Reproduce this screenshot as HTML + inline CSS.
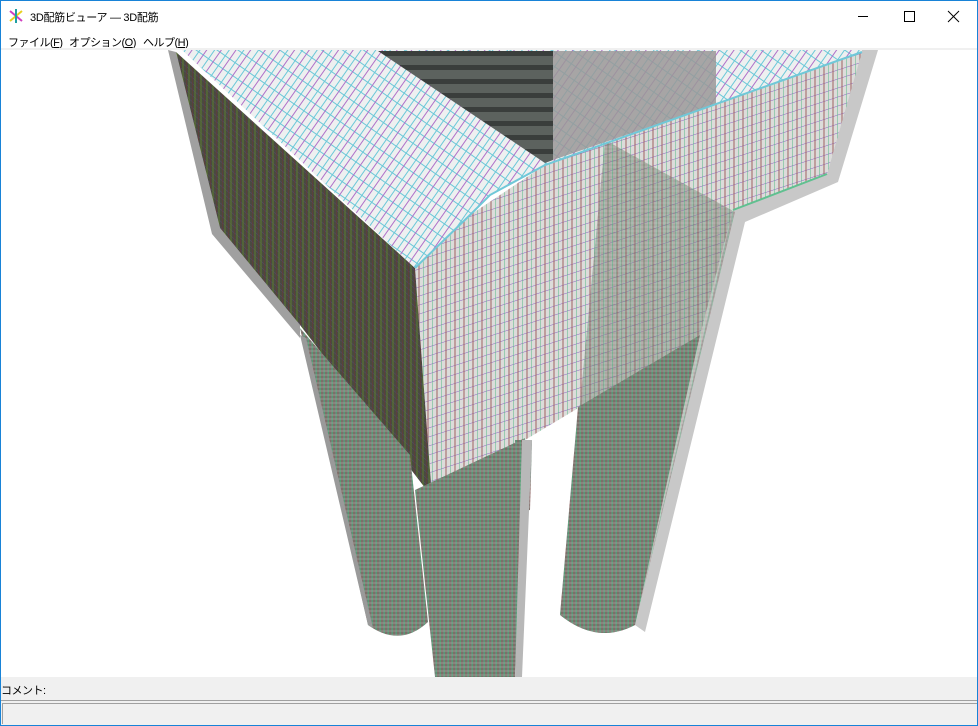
<!DOCTYPE html>
<html><head><meta charset="utf-8"><style>
html,body{margin:0;padding:0;width:978px;height:726px;overflow:hidden;background:#fff;font-family:"Liberation Sans","Noto Sans CJK JP",sans-serif;}
.win{position:absolute;left:0;top:0;width:976px;height:725px;border:1px solid #1883d7;border-top:none;background:#fff;}
.title{position:absolute;left:0;top:0;width:978px;height:31px;border-top:1px solid #1883d7;box-sizing:border-box;}
.title .t{position:absolute;left:30px;top:8px;font-size:11px;letter-spacing:-0.3px;color:#000;}
.m{position:absolute;top:34px;font-size:11px;letter-spacing:-0.5px;white-space:nowrap;}
.cbar{position:absolute;left:1px;top:677px;width:976px;height:23px;background:#f0f0f0;font-size:11px;letter-spacing:-0.5px;}
.sbar{position:absolute;left:1px;top:700px;width:976px;height:25px;background:#f0f0f0;border-top:1px solid #a0a0a0;box-sizing:border-box;}
.sbar div{position:absolute;left:1px;top:2px;right:0;bottom:1px;border-left:1px solid #a0a0a0;border-top:1px solid #a0a0a0;}
</style></head><body>
<div class="win"></div>
<div class="title">
<svg style="position:absolute;left:8px;top:7px" width="16" height="16" viewBox="0 0 16 16"><line x1="2" y1="3" x2="14" y2="13" stroke="#d040c0" stroke-width="2"/><line x1="2" y1="13" x2="14" y2="3" stroke="#e8d020" stroke-width="2"/><line x1="8" y1="1" x2="8" y2="15" stroke="#20a0a0" stroke-width="2"/></svg>
<div class="t">3D配筋ビューア ― 3D配筋</div>
<svg style="position:absolute;left:855px;top:8px" width="110" height="16"><line x1="3" y1="7.5" x2="13" y2="7.5" stroke="#000"/><rect x="49.5" y="2.5" width="10" height="10" fill="none" stroke="#000"/><line x1="93" y1="2" x2="104" y2="13" stroke="#000"/><line x1="104" y1="2" x2="93" y2="13" stroke="#000"/></svg>
</div>
<div class="m" style="left:8px">ファイル(<u>F</u>)</div>
<div class="m" style="left:69px">オプション(<u>O</u>)</div>
<div class="m" style="left:143px">ヘルプ(<u>H</u>)</div>
<div style="position:absolute;left:1px;top:48px;width:976px;height:2px;background:#f0f0f0"></div>
<svg style="position:absolute;left:0;top:50px" width="978" height="627" viewBox="0 50 978 627">
<defs>
<pattern id="gTop" width="12" height="12" patternUnits="userSpaceOnUse" patternTransform="rotate(35)"><rect width="12" height="12" fill="#eef0f0"/><path d="M0 0H12M0 0V12" stroke="#6ac8d8" stroke-width="2"/><path d="M6 0V12" stroke="#b070c8" stroke-width="1"/></pattern>
<pattern id="gFront" width="9" height="9" patternUnits="userSpaceOnUse" patternTransform="skewY(-18)"><rect width="9" height="9" fill="#dcdcda"/><path d="M0 0H9" stroke="#8a60c0" stroke-width="1"/><path d="M0 0V9" stroke="#58b888" stroke-width="1"/><path d="M5 0V9" stroke="#a06060" stroke-width="1"/></pattern>
<pattern id="gLeft" width="6" height="6" patternUnits="userSpaceOnUse" patternTransform="skewY(40)"><rect width="6" height="6" fill="#4a4a40"/><path d="M0 0H6" stroke="#5a4878"/><path d="M0 0V6" stroke="#6a3838"/><path d="M3 0V6" stroke="#5a7a30"/></pattern>
<pattern id="gPile" width="4" height="4" patternUnits="userSpaceOnUse"><rect width="4" height="4" fill="#6f8478"/><path d="M0 0V4" stroke="#3fb070" stroke-width="1"/><path d="M2 0V4" stroke="#8a5a5a" stroke-width="1"/><path d="M0 3H4" stroke="#a8b0a8" stroke-width="0.6"/></pattern>
<pattern id="gHole" width="20" height="14" patternUnits="userSpaceOnUse"><rect width="20" height="14" fill="#5c625e"/><rect y="9" width="20" height="5" fill="#3a3e3c"/></pattern>
</defs>
<polygon points="862,50 878,50 838,182 745,222 645,632 635,625 733,210 827,174" fill="#c8c8c8"/>
<polygon points="168,50 176,52 220,228 300,325 300,338 212,234" fill="#a0a0a0"/>
<polygon points="415,268 470,215 545,165 862,52 827,174 733,210 700,335 525,440 432,495" fill="url(#gFront)"/>
<path d="M605,140 L735,212 L635,625 Q597,645 560,615 Z" fill="url(#gPile)" opacity="0.5"/>
<path d="M700,335 L578,407 L560,615 Q597,645 635,625 Z" fill="url(#gPile)"/>
<polygon points="515,440 532,440 530,510 518,512" fill="url(#gPile)"/>
<polygon points="176,52 415,268 432,497 300,325 220,228" fill="url(#gLeft)"/>
<path d="M300,328 L410,455 L428,622 Q400,648 368,625 Z" fill="url(#gPile)"/>
<path d="M300,335 L306,338 L373,628 L368,625 Z" fill="#9a9a9a"/>
<polygon points="182,50 862,50 862,52 545,165 490,195 470,215 415,268" fill="url(#gTop)"/>
<polygon points="378,51 553,51 553,160 545,163" fill="url(#gHole)"/>
<polygon points="553,51 716,51 716,104 553,160" fill="#9a9898" opacity="0.85"/>
<polyline points="415,268 470,215 490,195 545,165 862,52" fill="none" stroke="#70c8d8" stroke-width="2"/>
<polyline points="827,174 733,210" fill="none" stroke="#60c090" stroke-width="2"/>
<path d="M415,490 L525,438 L515,677 L435,677 Z" fill="url(#gPile)"/>
<path d="M522,440 L532,440 L522,677 L515,677 Z" fill="#b8b8b8"/>
</svg>
<div class="cbar"><span style="position:absolute;left:0;top:5px">コメント:</span></div>
<div class="sbar"><div></div></div>
</body></html>
